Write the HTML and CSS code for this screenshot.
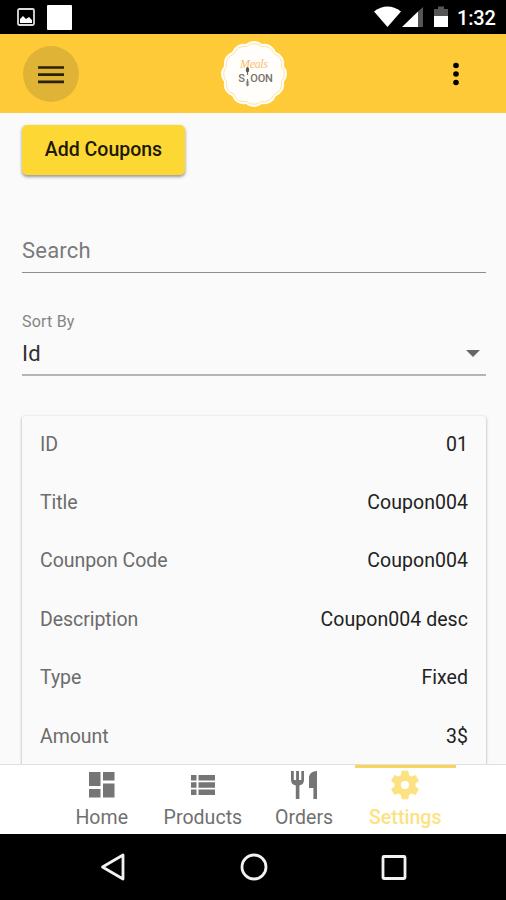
FILE: index.html
```html
<!DOCTYPE html>
<html lang="en">
<head>
<meta charset="utf-8">
<title>Coupons</title>
<link rel="stylesheet" href="styles.css">
</head>
<body>
<div class="status">
  <svg class="pic" width="18" height="18" viewBox="0 0 18 18"><rect x="1" y="1" width="16" height="16" rx="1.5" fill="none" stroke="#ddd" stroke-width="1.8"/><path d="M3 15v-4l3-3 3 3 3-2 3 3v3z" fill="#fff"/></svg>
  <span class="square"></span>
  <svg class="signals" width="76" height="22" viewBox="0 0 76 22"><path d="M0 5.500Q13.500-4.500 27 5.500L13.500 21z" fill="#fff"/><path d="M44 5.500L49 1v20h-5z" fill="#555"/><path d="M28 21L44 5.500V21z" fill="#fff"/><path d="M60 3h4V.5h6V3h4v7H60z" fill="#555"/><path d="M60 10h14v11H60z" fill="#fff"/></svg>
  <span class="time">1:32</span>
</div>
<header class="appbar">
  <button class="menu" aria-label="Menu"><svg width="26" height="18" viewBox="0 0 26 18"><path d="M0 1.500h26M0 8.700h26M0 15.900h26" stroke="#2a2108" stroke-width="2.700"/></svg></button>
  <svg class="logo" width="68" height="68" viewBox="-34 -34 68 68">
    <defs><path id="badge" d="M29.900 8A12 12 0 0 1 21.900 21.900A12 12 0 0 1 8 29.900A12 12 0 0 1-8 29.900A12 12 0 0 1-21.900 21.900A12 12 0 0 1-29.900 8A12 12 0 0 1-29.900-8A12 12 0 0 1-21.900-21.900A12 12 0 0 1-8-29.900A12 12 0 0 1 8-29.900A12 12 0 0 1 21.900-21.900A12 12 0 0 1 29.900-8A12 12 0 0 1 29.900 8z"/></defs>
    <use href="#badge" fill="#fffefa"/>
    <use href="#badge" transform="scale(.92)" fill="none" stroke="#fbdfa0" stroke-width="1"/>
    <text class="script" x="0" y="-6" text-anchor="middle" textLength="28">Meals</text>
    <g class="word"><text x="-12.500" y="7.500">S</text><text x="0" y="7.500">O</text><text x="7.500" y="7.500">O</text><text x="15" y="7.500">N</text></g>
    <path d="M-6.500-7v8M-6.500 5v7" stroke="#75706a" stroke-width="1.200"/><ellipse cx="-6.500" cy="-4" rx="1.700" ry="2.400" fill="#59544e"/><ellipse cx="-6.500" cy="9.500" rx="1.300" ry="2.500" fill="none" stroke="#999289" stroke-width=".8"/>
  </svg>
  <svg class="more" width="6" height="24" viewBox="0 0 6 24"><circle cx="3" cy="3.500" r="2.800"/><circle cx="3" cy="12" r="2.800"/><circle cx="3" cy="20.500" r="2.800"/></svg>
</header>
<main class="content">
  <button class="add">Add Coupons</button>
  <div class="search">Search</div>
  <div class="sort">
    <div class="sort-label">Sort By</div>
    <div class="sort-value"><span>Id</span><i class="caret"></i></div>
  </div>
  <section class="card">
    <div class="row"><span>ID</span><b>01</b></div>
    <div class="row"><span>Title</span><b>Coupon004</b></div>
    <div class="row"><span>Counpon Code</span><b>Coupon004</b></div>
    <div class="row"><span>Description</span><b>Coupon004 desc</b></div>
    <div class="row"><span>Type</span><b>Fixed</b></div>
    <div class="row"><span>Amount</span><b>3$</b></div>
  </section>
</main>
<nav class="tabs">
  <a class="tab"><svg width="30" height="30" viewBox="0 0 30 30"><path d="M2 2h11.500v14H2zM16 2h11.500v8.500H16zM2 19h11.500v8.500H2zM16 13.500h11.500v14H16z"/></svg><span>Home</span></a>
  <a class="tab"><svg width="30" height="30" viewBox="0 0 30 30"><path d="M3 5h5.500v5.500H3zM10.500 5H27v5.500H10.500zM3 12.200h5.500v5.500H3zM10.500 12.200H27v5.500H10.500zM3 19.400h5.500v5.500H3zM10.500 19.400H27v5.500H10.500z"/></svg><span>Products</span></a>
  <a class="tab"><svg width="30" height="30" viewBox="0 0 30 30"><path d="M2 1h2.800v9h2.300V1H10v9h2.300V1H15v9c0 3-1.600 5-4.600 5.500V29H6.800V15.500C3.700 15 2 13 2 10zM28 1v28h-3.600V18H20V8c0-4 3-7 8-7z"/></svg><span>Orders</span></a>
  <a class="tab active"><svg width="34" height="34" viewBox="0 0 24 24"><path d="M19.430 12.980c.04-.32.070-.64.070-.98s-.03-.66-.07-.98l2.110-1.650c.19-.15.240-.42.120-.64l-2-3.460c-.12-.22-.39-.3-.61-.22l-2.490 1c-.52-.4-1.080-.73-1.690-.98l-.38-2.650C14.460 2.180 14.250 2 14 2h-4c-.25 0-.46.180-.49.420l-.38 2.650c-.61.250-1.170.590-1.690.980l-2.490-1c-.23-.09-.49 0-.61.220l-2 3.460c-.13.220-.07.490.120.640l2.110 1.650c-.04.320-.07.650-.07.980s.03.660.070.980l-2.110 1.650c-.19.150-.24.420-.12.640l2 3.460c.12.220.390.300.610.220l2.490-1c.52.400 1.080.730 1.690.980l.38 2.650c.03.240.240.420.490.420h4c.25 0 .46-.18.490-.42l.38-2.650c.61-.25 1.170-.59 1.690-.98l2.490 1c.23.090.490 0 .610-.22l2-3.460c.12-.22.070-.49-.12-.64l-2.110-1.650zM12 14.900a2.900 2.900 0 1 1 0-5.800 2.900 2.900 0 0 1 0 5.800z"/></svg><span>Settings</span></a>
</nav>
<div class="system">
  <svg width="28" height="30" viewBox="0 0 28 30"><path d="M3.500 15L24 3v24z"/></svg>
  <svg width="28" height="30" viewBox="0 0 28 30"><circle cx="14" cy="15" r="12"/></svg>
  <svg width="28" height="30" viewBox="0 0 28 30"><rect x="3" y="4.500" width="22" height="22" rx="1"/></svg>
</div>
</body>
</html>
```
FILE: styles.css
```css
* { box-sizing: border-box; }
body {
  margin: 0;
  width: 506px;
  height: 900px;
  overflow: hidden;
  display: flex;
  flex-direction: column;
  background: #fafafa;
  font-family: Roboto, sans-serif;
  letter-spacing: .05px;
}
svg { display: block; flex: none; }
button { border: 0; padding: 0; font: inherit; letter-spacing: inherit; }
.status {
  flex: 0 0 34px;
  background: #000;
  display: flex;
  align-items: center;
  padding: 0 10px 0 17px;
}
.square { width: 25px; height: 25px; margin-left: 12px; background: #fff; border-radius: 1px; }
.signals { margin-left: auto; }
.time { width: 39px; margin: 2px 0 0 7px; color: #fff; font-size: 20px; font-weight: 500; letter-spacing: -.2px; }
.appbar {
  flex: 0 0 79px;
  background: #ffca38;
  display: grid;
  grid-template-columns: 197px 68px 1fr;
  align-items: center;
  padding: 0 47px 0 23px;
}
.menu {
  width: 56px;
  height: 56px;
  border-radius: 50%;
  background: #dfb436;
  display: grid;
  place-items: center;
}
.menu svg { margin-top: 2px; }
.more { justify-self: end; margin-top: 1px; }
.script { font: italic 12px "Liberation Serif", serif; fill: #f5bd78; letter-spacing: 0; }
.word text { font: 500 11px Roboto, sans-serif; fill: #77736c; text-anchor: middle; letter-spacing: 0; }
.content { flex: 1; min-height: 0; overflow: hidden; padding: 12px 20px 0 22px; }
.add {
  display: block;
  width: 163px;
  height: 50px;
  padding-bottom: 2px;
  border-radius: 5px;
  background: #fdd835;
  color: #1c1905;
  font-size: 19.500px;
  font-weight: 500;
  letter-spacing: 0;
  box-shadow: 0 2px 3px rgba(0,0,0,.32), 0 1px 4px rgba(0,0,0,.12);
}
.search {
  height: 38px;
  margin-top: 60px;
  border-bottom: 1px solid #8e8e8e;
  line-height: 32px;
  font-size: 22px;
  letter-spacing: .2px;
  color: #7b7b7b;
}
.sort { margin-top: 38px; height: 65px; border-bottom: 2px solid #b4b4b4; letter-spacing: .2px; }
.sort-label { font-size: 16px; line-height: 22px; color: #858585; }
.sort-value {
  display: flex;
  align-items: center;
  justify-content: space-between;
  height: 40px;
  font-size: 22px;
  color: #303030;
  padding-right: 6px;
}
.caret { border: 7px solid transparent; border-top: 7px solid #666; border-bottom: 0; }
.card {
  margin-top: 40px;
  padding-top: 0;
  height: 400px;
  border-radius: 3px;
  background: #fafafa;
  box-shadow: 0 1px 3px rgba(0,0,0,.36);
}
.row {
  height: 58.400px;
  display: flex;
  align-items: center;
  justify-content: space-between;
  padding: 0 18px 2px;
  font-size: 19.500px;
  color: #6c6c6c;
}
.row span { letter-spacing: -.05px; }
.row b { font-weight: 400; color: #222; }
.tabs {
  flex: 0 0 70px;
  display: grid;
  grid-template-columns: repeat(4, 101.200px);
  justify-content: center;
  padding-left: 1px;
  background: #fff;
  border-top: 1px solid #e0e0e0;
}
.tab {
  display: flex;
  flex-direction: column;
  align-items: center;
  font-size: 19.500px;
  line-height: 24px;
  color: #707070;
  fill: #757575;
  border-top: 3px solid transparent;
}
.tab svg { height: 34px; }
.tab span { margin-top: 4px; }
.tab.active { color: #fde283; fill: #fde283; border-color: #fbd45c; font-weight: 500; }
.system {
  flex: 0 0 66px;
  display: flex;
  justify-content: space-between;
  align-items: center;
  padding: 0 98px 0 99px;
  background: #000;
}
.system path, .system circle, .system rect { fill: none; stroke: #f2f2f2; stroke-width: 2.800; stroke-linejoin: round; }
```
